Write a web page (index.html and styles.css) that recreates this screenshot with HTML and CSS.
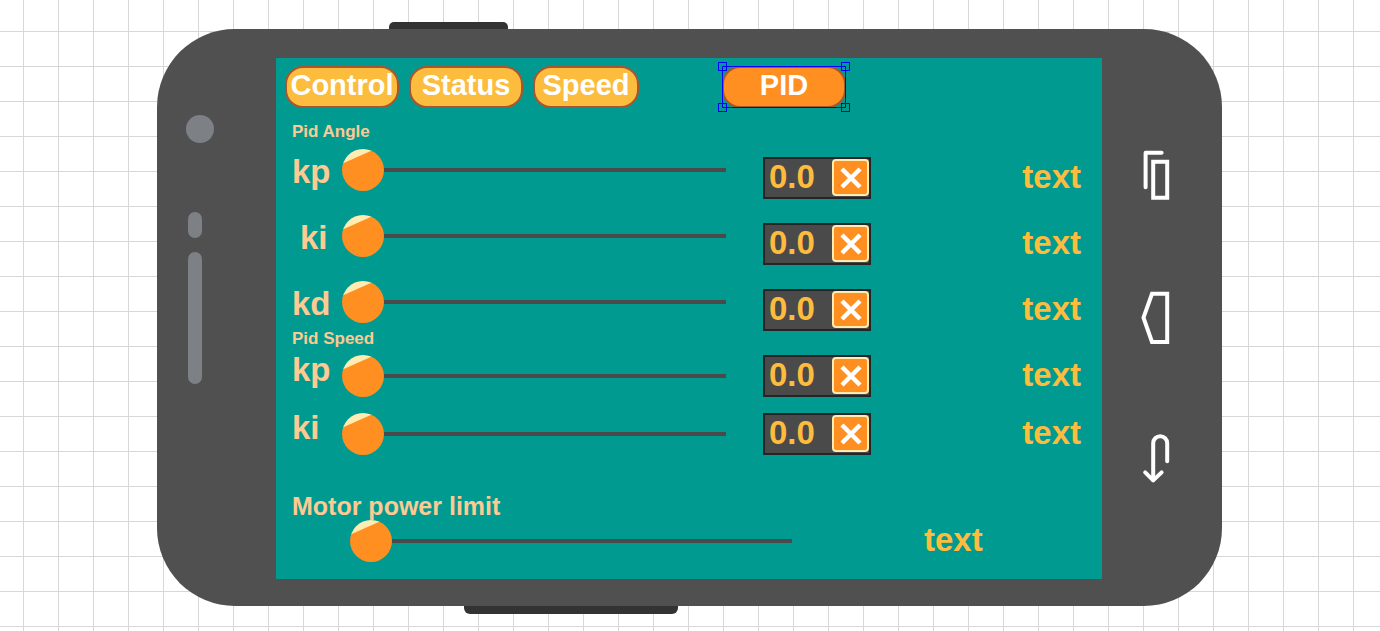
FILE: index.html
```html
<!DOCTYPE html>
<html lang="en">
<head>
<meta charset="utf-8">
<title>PID panel</title>
<link rel="stylesheet" href="styles.css">
</head>
<body>
<main class="phone">
  <span class="side-key side-key-top"></span>
  <span class="side-key side-key-bottom"></span>

  <div class="sensors">
    <span class="camera"></span>
    <span class="sensor"></span>
    <span class="speaker"></span>
  </div>

  <section class="screen">
    <nav class="tabs">
      <button class="tab" type="button">Control</button>
      <button class="tab" type="button">Status</button>
      <button class="tab tab-narrow" type="button">Speed</button>
      <div class="selection">
        <button class="tab tab-active" type="button">PID</button>
        <span class="handle handle-nw"></span>
        <span class="handle handle-ne"></span>
        <span class="handle handle-sw"></span>
        <span class="handle handle-se"></span>
      </div>
    </nav>

    <div class="pid">
      <div class="sliders">
        <h2 class="group-title">Pid Angle</h2>
        <div class="angle-rows">
          <div class="row"><label class="name" for="akp">kp</label><input class="slider" id="akp" type="range" value="0"></div>
          <div class="row"><label class="name name-indent" for="aki">ki</label><input class="slider" id="aki" type="range" value="0"></div>
          <div class="row"><label class="name" for="akd">kd</label><input class="slider" id="akd" type="range" value="0"></div>
        </div>
        <h2 class="group-title">Pid Speed</h2>
        <div class="speed-rows">
          <div class="row"><label class="name name-raised" for="skp">kp</label><input class="slider" id="skp" type="range" value="0"></div>
          <div class="row"><label class="name name-raised" for="ski">ki</label><input class="slider" id="ski" type="range" value="0"></div>
        </div>
      </div>

      <div class="cells">
        <div class="field"><input class="number" type="text" value="0.0" aria-label="Angle kp"><button class="clear" type="button" aria-label="Clear"><svg class="cross" viewBox="0 0 22 22"><path d="M2 2L20 20M20 2L2 20"/></svg></button></div>
        <div class="field"><input class="number" type="text" value="0.0" aria-label="Angle ki"><button class="clear" type="button" aria-label="Clear"><svg class="cross" viewBox="0 0 22 22"><path d="M2 2L20 20M20 2L2 20"/></svg></button></div>
        <div class="field"><input class="number" type="text" value="0.0" aria-label="Angle kd"><button class="clear" type="button" aria-label="Clear"><svg class="cross" viewBox="0 0 22 22"><path d="M2 2L20 20M20 2L2 20"/></svg></button></div>
        <div class="field"><input class="number" type="text" value="0.0" aria-label="Speed kp"><button class="clear" type="button" aria-label="Clear"><svg class="cross" viewBox="0 0 22 22"><path d="M2 2L20 20M20 2L2 20"/></svg></button></div>
        <div class="field field-last"><input class="number" type="text" value="0.0" aria-label="Speed ki"><button class="clear" type="button" aria-label="Clear"><svg class="cross" viewBox="0 0 22 22"><path d="M2 2L20 20M20 2L2 20"/></svg></button></div>
      </div>

      <div class="cells cells-text">
        <span class="readout">text</span>
        <span class="readout">text</span>
        <span class="readout">text</span>
        <span class="readout">text</span>
        <span class="readout field-last">text</span>
      </div>
    </div>

    <div class="motor">
      <label class="motor-title" for="motor">Motor power limit</label>
      <div class="motor-row">
        <input class="slider" id="motor" type="range" value="0">
        <span class="readout">text</span>
      </div>
    </div>
  </section>

  <nav class="nav-keys">
    <button class="nav-key" type="button" aria-label="Recent apps"><svg class="glyph" viewBox="0 0 30 54"><path d="M4.6 39.2V4.8H20.6"/><path stroke-linejoin="miter" d="M12.2 13.7H26.2V49.8H12.2Z"/></svg></button>
    <button class="nav-key" type="button" aria-label="Home"><svg class="glyph" viewBox="0 0 30 54"><path stroke-linejoin="miter" d="M2.5 27.7L11 3.8H26.2V52H11Z"/></svg></button>
    <button class="nav-key" type="button" aria-label="Back"><svg class="glyph" viewBox="0 0 30 54"><path d="M26.2 29.2V11.2A7 7 0 0 0 12.2 11.2V48"/><path d="M4.2 40.4L12.2 48.4L20.6 40.4"/></svg></button>
  </nav>
</main>
</body>
</html>
```

FILE: styles.css
```css
* {
  box-sizing: border-box;
}

body {
  margin: 0;
  padding: 29px 158px 25px 157px;
  min-height: 100vh;
  font-family: "Liberation Sans", Arial, sans-serif;
  font-weight: bold;
  background-color: #fff;
  background-image:
    linear-gradient(to right, #d7d7d7 1px, transparent 1px),
    linear-gradient(to bottom, #d7d7d7 1px, transparent 1px);
  background-size: 35px 35px;
  background-position: 23px 31px;
}

button,
input {
  font: inherit;
  margin: 0;
  padding: 0;
  border: 0;
  background: none;
}

.phone {
  position: relative;
  display: grid;
  grid-template-columns: 119px minmax(0, 1fr) 120px;
  padding: 29px 0 27px;
  background: #505050;
  border-radius: 78px;
}

/* hardware keys on the edges of the case */
.side-key {
  position: absolute;
  height: 8px;
  background: #333;
}

.side-key-top {
  left: 232px;
  top: -7px;
  width: 119px;
  height: 7px;
  border-radius: 5px 5px 0 0;
}

.side-key-bottom {
  left: 307px;
  bottom: -8px;
  width: 214px;
  border-radius: 0 0 6px 6px;
}

.sensors {
  display: flex;
  flex-direction: column;
  padding: 57px 0 0 29px;
}

.camera,
.sensor,
.speaker {
  background: #7d8085;
  border-radius: 14px;
}

.camera {
  width: 28px;
  height: 28px;
}

.sensor,
.speaker {
  width: 14px;
  margin-left: 2px;
}

.sensor {
  height: 26px;
  margin-top: 69px;
}

.speaker {
  height: 132px;
  margin-top: 14px;
}

.screen {
  background: #009a91;
  padding: 8px 0 17px;
}

.tabs {
  display: flex;
  gap: 10px;
  padding-left: 9px;
}

.tab {
  width: 114px;
  height: 42px;
  padding-bottom: 4px;
  border: 2px solid #a9552f;
  border-radius: 18px;
  background: #fcbc3d;
  color: #fff;
  font-size: 29px;
  line-height: 34px;
  white-space: nowrap;
}

.tab-narrow {
  width: 106px;
}

.selection {
  position: relative;
  margin-left: 73px;
  outline: 1px solid #00f;
  outline-offset: -1px;
}

.tab-active {
  display: block;
  width: 124px;
  background: #ff8f20;
}

.handle {
  position: absolute;
  width: 9px;
  height: 9px;
  border: 1px solid #00f;
}

.handle-nw {
  left: -4px;
  top: -4px;
}

.handle-ne {
  right: -4px;
  top: -4px;
}

.handle-sw {
  left: -4px;
  bottom: -4px;
}

.handle-se {
  right: -4px;
  bottom: -4px;
}

.pid {
  display: grid;
  grid-template-columns: minmax(0, 1fr) 108px 210px;
  padding: 13px 21px 0 16px;
}

.sliders {
  padding-right: 37px;
}

.group-title {
  margin: 0;
  font-size: 17px;
  line-height: 22px;
  color: #fcca92;
}

.angle-rows,
.speed-rows {
  display: grid;
}

.angle-rows {
  gap: 24px;
  padding: 6px 0 5px;
}

.speed-rows {
  gap: 16px;
  padding-top: 5px;
}

.row {
  display: grid;
  grid-template-columns: 50px minmax(0, 1fr);
  height: 42px;
}

.name {
  font-size: 33px;
  line-height: 46px;
  color: #fcca92;
}

.name-indent {
  padding-left: 8px;
}

.name-raised {
  line-height: 30px;
}

.slider {
  -webkit-appearance: none;
  appearance: none;
  width: 100%;
  height: 42px;
  background: linear-gradient(#4a4a4a, #4a4a4a) center / 100% 4px no-repeat;
}

.slider::-webkit-slider-thumb {
  -webkit-appearance: none;
  width: 42px;
  height: 42px;
  border-radius: 50%;
  background: linear-gradient(156deg, #ffecb3 13px, #ff8f20 14px);
}

.cells {
  display: flex;
  flex-direction: column;
  gap: 24px;
  padding-top: 36px;
}

.cells-text {
  align-items: flex-end;
}

.field-last {
  margin-top: -8px;
}

.field {
  display: flex;
  height: 42px;
  border: 2px solid #252525;
  background: #4a4a4a;
}

.number {
  flex: 1;
  min-width: 0;
  height: 36px;
  padding-left: 4px;
  font-size: 33px;
  line-height: 36px;
  color: #fdbc3d;
}

.clear {
  display: flex;
  align-items: center;
  justify-content: center;
  width: 37px;
  height: 37px;
  border: 2px solid #ffecb3;
  border-radius: 4px;
  background: #ff8f20;
}

.cross {
  width: 22px;
  height: 22px;
  flex: none;
  fill: none;
  stroke: #fff;
  stroke-width: 4.5;
}

.readout {
  height: 42px;
  font-size: 33px;
  line-height: 40px;
  color: #fdbc3d;
}

.motor {
  padding-top: 39px;
}

.motor-title {
  display: block;
  padding-left: 16px;
  font-size: 25px;
  line-height: 24px;
  color: #fcca92;
}

.motor-row {
  display: grid;
  grid-template-columns: minmax(0, 1fr) 178px;
  column-gap: 132px;
  padding: 2px 0 0 74px;
}

.nav-keys {
  display: flex;
  flex-direction: column;
  gap: 88px;
  padding: 90px 0 0 39px;
}

.nav-key {
  width: 30px;
  height: 54px;
}

.glyph {
  display: block;
  width: 30px;
  height: 54px;
  fill: none;
  stroke: #fff;
  stroke-width: 4;
  stroke-linecap: round;
  stroke-linejoin: round;
}
```
